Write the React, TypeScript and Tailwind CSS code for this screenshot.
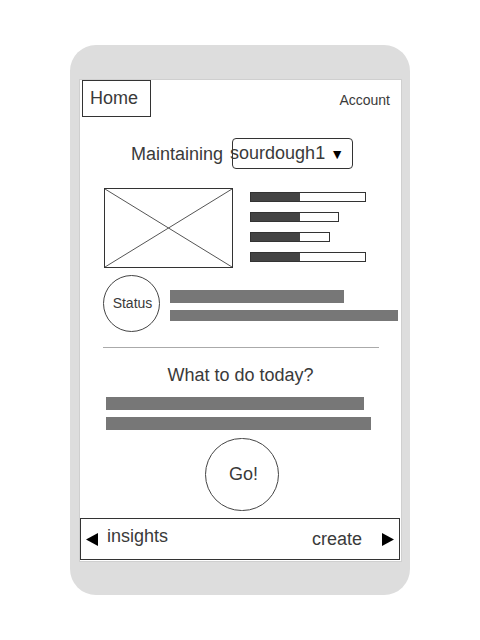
import React from 'react'

const BARS = [116, 89, 80, 116]

function Meter({ width }: { width: number }) {
  return (
    <div className="h-[10px] border border-[#333] bg-white flex" style={{ width }}>
      <div className="w-[49px] h-full bg-[#444]" />
    </div>
  )
}

function Arrow({ dir }: { dir: 'left' | 'right' }) {
  return (
    <svg width="12" height="13" viewBox="0 0 12 13">
      <polygon points={dir === 'left' ? '12,0 12,13 0,6.5' : '0,0 0,13 12,6.5'} fill="#000" />
    </svg>
  )
}

export default function App() {
  return (
    <div className="w-[480px] h-[640px] bg-white pt-[45px] pl-[70px] text-[#3a3a3a] font-['Liberation_Sans',Arial,sans-serif]">
      <div className="w-[340px] h-[550px] rounded-[26px] bg-[#dddddd] pt-[35px] pl-[10px]">
        <div className="w-[321px] h-[481px] bg-white shadow-[0_0_0_1px_#cfcfcf]">
          {/* header */}
          <div className="h-[37px] flex items-start justify-between">
            <div className="ml-[2px] w-[69px] h-[37px] border border-[#333] pl-[7px] flex items-center text-[18px]">Home</div>
            <div className="mr-[11px] mt-[11px] text-[14px] leading-[18px]">Account</div>
          </div>

          {/* starter selector */}
          <div className="mt-[21px] pl-[51px] flex items-center h-[31px]">
            <span className="text-[18px] leading-[21px] mt-[1px]">Maintaining</span>
            <div className="ml-[9px] w-[121px] h-[31px] border border-[#333] rounded-[4px] flex items-center">
              <span className="-ml-[3px] text-[18px] leading-[21px] mt-[1px] whitespace-nowrap">
                sourdough1 <span className="text-[14px] text-black">▼</span>
              </span>
            </div>
          </div>

          {/* picture + meters */}
          <div className="mt-[19px] flex items-start">
            <div className="ml-[24px] w-[129px] h-[80px] border border-[#333]">
              <svg width="127" height="78" viewBox="0 0 127 78" className="block">
                <line x1="0" y1="0" x2="127" y2="78" stroke="#555" strokeWidth="1" />
                <line x1="127" y1="0" x2="0" y2="78" stroke="#555" strokeWidth="1" />
              </svg>
            </div>
            <div className="ml-[17px] mt-[4px] flex flex-col gap-[10px]">
              {BARS.map((w, i) => (
                <Meter key={i} width={w} />
              ))}
            </div>
          </div>

          {/* status */}
          <div className="mt-[7px] flex items-start">
            <div className="ml-[23px] w-[57px] h-[57px] rounded-full border border-[#444] flex items-center justify-center text-[14px] pl-[2px]">
              Status
            </div>
            <div className="ml-[10px] mt-[15px] flex flex-col gap-[7px]">
              <div className="w-[174px] h-[13px] bg-[#777]" />
              <div className="w-[228px] h-[11px] bg-[#777]" />
            </div>
          </div>

          <div className="mt-[15px] ml-[23px] w-[276px] h-px bg-[#aaa]" />

          {/* today */}
          <div className="mt-[17px] text-center text-[18px] leading-[21px]">What to do today?</div>
          <div className="mt-[11px] ml-[26px] flex flex-col gap-[7px]">
            <div className="w-[258px] h-[13px] bg-[#777]" />
            <div className="w-[265px] h-[13px] bg-[#777]" />
          </div>

          <div className="mt-[8px] ml-[125px] w-[74px] h-[73px] rounded-full border border-[#444] flex items-center justify-center text-[18px] pl-[3px]">
            Go!
          </div>

          {/* bottom nav */}
          <div className="mt-[7px] w-[320px] h-[42px] border border-[#333] flex items-center px-[5px]">
            <Arrow dir="left" />
            <span className="ml-[9px] -mt-[6px] text-[18px] leading-[21px]">insights</span>
            <span className="ml-auto mr-[20px] text-[18px] leading-[21px]">create</span>
            <Arrow dir="right" />
          </div>
        </div>
      </div>
    </div>
  )
}
